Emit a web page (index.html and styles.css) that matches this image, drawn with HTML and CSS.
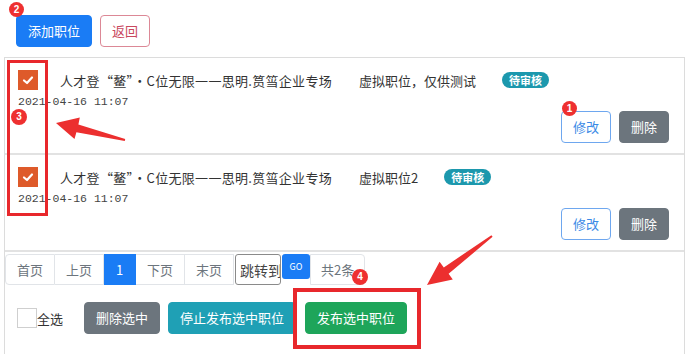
FILE: index.html
```html
<!DOCTYPE html>
<html lang="zh-CN">

<head>
    <meta charset="UTF-8">
    <meta name="viewport" content="width=device-width, initial-scale=1.0">
    <title>职位管理</title>
    <link rel="stylesheet" href="styles.css">
</head>

<body>
    <div class="page">
        <div class="toolbar">
            <button class="btn btn-primary">添加职位</button>
            <button class="btn btn-outline-danger">返回</button>
        </div>

        <div class="card">
            <div class="job">
                <div class="job-head">
                    <span class="check checked">
                        <svg width="20" height="20" viewBox="0 0 20 20"><polyline points="6,10.5 9,13 14,7.5" fill="none" stroke="#fff" stroke-width="2.2" stroke-linecap="round" stroke-linejoin="round"/></svg>
                    </span>
                    <span class="job-title">人才登“鳌”·C位无限一一思明.筼筜企业专场</span>
                    <span class="job-desc">虚拟职位，仅供测试</span>
                    <span class="tag">待审核</span>
                </div>
                <div class="job-time">2021-04-16 11:07</div>
                <div class="job-actions">
                    <button class="btn btn-outline-primary">修改</button>
                    <button class="btn btn-secondary">删除</button>
                </div>
            </div>

            <div class="job">
                <div class="job-head">
                    <span class="check checked">
                        <svg width="20" height="20" viewBox="0 0 20 20"><polyline points="6,10.5 9,13 14,7.5" fill="none" stroke="#fff" stroke-width="2.2" stroke-linecap="round" stroke-linejoin="round"/></svg>
                    </span>
                    <span class="job-title">人才登“鳌”·C位无限一一思明.筼筜企业专场</span>
                    <span class="job-desc">虚拟职位2</span>
                    <span class="tag">待审核</span>
                </div>
                <div class="job-time">2021-04-16 11:07</div>
                <div class="job-actions">
                    <button class="btn btn-outline-primary">修改</button>
                    <button class="btn btn-secondary">删除</button>
                </div>
            </div>

            <div class="pager">
                <span class="pg first">首页</span>
                <span class="pg">上页</span>
                <span class="pg active">1</span>
                <span class="pg">下页</span>
                <span class="pg">末页</span>
                <input class="pg-input" type="text" placeholder="跳转到">
                <button class="pg-go">GO</button>
                <span class="pg last">共2条</span>
            </div>

            <div class="batch">
                <span class="check"></span>
                <span class="check-label">全选</span>
                <button class="btn btn-secondary">删除选中</button>
                <button class="btn btn-info">停止发布选中职位</button>
                <button class="btn btn-success">发布选中职位</button>
            </div>
        </div>

        <!-- annotation layer -->
        <div class="marks">
            <svg width="692" height="354" viewBox="0 0 692 354">
                <rect x="8.5" y="61.5" width="38" height="153" fill="none" stroke="#e8282c" stroke-width="3"/>
                <rect x="295" y="290" width="124" height="57" fill="none" stroke="#e8282c" stroke-width="4"/>
                <polygon points="56,123 79.8,117.6 78.4,124.4 125.2,139 124.8,141 76.4,132.2 74.5,139" fill="#ec2f2f"/>
                <polygon points="427,285 439.6,261.8 443.8,267.4 491.4,235.2 492.6,236.8 448.6,273.8 452.8,279.4" fill="#ec2f2f"/>
            </svg>
            <span class="num n2">2</span>
            <span class="num n1">1</span>
            <span class="num n3">3</span>
            <span class="num n4">4</span>
        </div>
    </div>
</body>

</html>
```

FILE: styles.css
```css
body,
html {
    margin: 0;
    padding: 0;
    background: #fff;
}

body {
    font-family: "Noto Sans CJK SC", "Noto Sans", sans-serif;
    font-size: 13px;
    color: #333;
}

.page {
    position: relative;
    width: 692px;
    height: 354px;
    overflow: hidden;
}

.toolbar {
    display: flex;
    gap: 8px;
    padding: 15px 0 10px 16px;
}

/* Buttons */
.btn {
    height: 32px;
    padding: 0 11px;
    font-family: inherit;
    font-size: 13px;
    line-height: 30px;
    border-radius: 4px;
    border: 1px solid transparent;
    background: #fff;
    color: #fff;
    cursor: pointer;
}

.btn-primary {
    background: #1a7cf5;
    border-color: #1a7cf5;
}

.btn-outline-danger {
    border-color: #dc8896;
    color: #c9485e;
    width: 50px;
}

.btn-outline-primary {
    border-color: #6ea7ef;
    color: #3b8ae6;
    width: 50px;
}

.btn-secondary {
    background: #6c757d;
    border-color: #6c757d;
}

.btn-info {
    background: #1fa0b5;
    border-color: #1fa0b5;
}

.btn-success {
    background: #1ea55a;
    border-color: #1ea55a;
}

.card {
    margin-left: 4px;
    width: 681px;
    box-sizing: border-box;
    border: 1px solid #dcdcdc;
}

/* Job rows */
.job {
    padding: 12px 15px 10px 13px;
    border-bottom: 2px solid #e2e2e2;
}

.job-head {
    display: flex;
    align-items: center;
    height: 20px;
}

.check {
    display: inline-block;
    width: 20px;
    height: 20px;
    box-sizing: border-box;
    border: 1px solid #cfcfcf;
    background: #fff;
}

.check.checked {
    border: none;
    background: #de5a2a;
}

.check svg {
    display: block;
}

.job-title {
    margin-left: 22px;
    margin-right: 27px;
    letter-spacing: 0.3px;
    white-space: nowrap;
}

.job-desc {
    margin-right: 26px;
    white-space: nowrap;
}

.tag {
    height: 16px;
    padding: 0 7px;
    border-radius: 8px;
    background: #1c98ad;
    color: #fff;
    font-size: 11px;
    font-weight: bold;
    line-height: 16px;
}

.job-time {
    margin-top: 5px;
    height: 14px;
    line-height: 14px;
    font-family: "Liberation Mono", monospace;
    font-size: 11.5px;
    color: #444;
}

.job-actions {
    display: flex;
    justify-content: flex-end;
    gap: 8px;
    margin-top: 2px;
}

/* Pagination */
.pager {
    display: flex;
    align-items: flex-start;
    margin-top: 2px;
    height: 31px;
}

.pg {
    height: 31px;
    box-sizing: border-box;
    padding: 0 11px;
    border: 1px solid #e1e4e8;
    border-left: none;
    line-height: 29px;
    color: #6c757d;
    font-size: 13px;
}

.pg.first {
    border-left: 1px solid #e1e4e8;
    border-radius: 4px 0 0 4px;
}

.pg.active {
    width: 32px;
    padding: 0;
    text-align: center;
    background: #1a7cf5;
    border-color: #1a7cf5;
    color: #fff;
}

.pg.last {
    border-left: 1px solid #e1e4e8;
    border-radius: 0 4px 4px 0;
    padding: 0 10px;
}

.pg-input {
    width: 46px;
    height: 31px;
    box-sizing: border-box;
    margin: 0 0 0 1px;
    padding: 0 0 0 4px;
    border: 1px solid #8a8a8a;
    border-radius: 3px;
    font-family: inherit;
    font-size: 14px;
}

.pg-input::placeholder {
    color: #444;
}

.pg-go {
    width: 28px;
    height: 25px;
    margin-left: 1px;
    padding: 0;
    border: none;
    border-radius: 3px;
    background: #1a7cf5;
    color: #fff;
    font-family: inherit;
    font-size: 9px;
}

/* Batch actions */
.batch {
    display: flex;
    align-items: center;
    gap: 8px;
    padding: 17px 0 21px 12px;
}

.check-label {
    margin-left: -8px;
    margin-right: 13px;
}

.btn-success {
    margin-left: 1px;
}

/* Annotations */
.marks {
    position: absolute;
    top: 0;
    left: 0;
    width: 692px;
    height: 354px;
    pointer-events: none;
}

.marks svg {
    display: block;
}

.num {
    position: absolute;
    width: 15px;
    height: 15px;
    border-radius: 50%;
    background: #ee3030;
    color: #fff;
    font-family: "Liberation Sans", sans-serif;
    font-size: 10px;
    font-weight: bold;
    line-height: 15px;
    text-align: center;
}

.n2 {
    left: 9px;
    top: 2px;
}

.n1 {
    left: 562px;
    top: 101px;
}

.n3 {
    left: 11px;
    top: 109px;
    width: 16px;
    height: 16px;
    line-height: 16px;
}

.n4 {
    left: 352px;
    top: 269px;
    width: 16px;
    height: 16px;
    line-height: 16px;
}
```
